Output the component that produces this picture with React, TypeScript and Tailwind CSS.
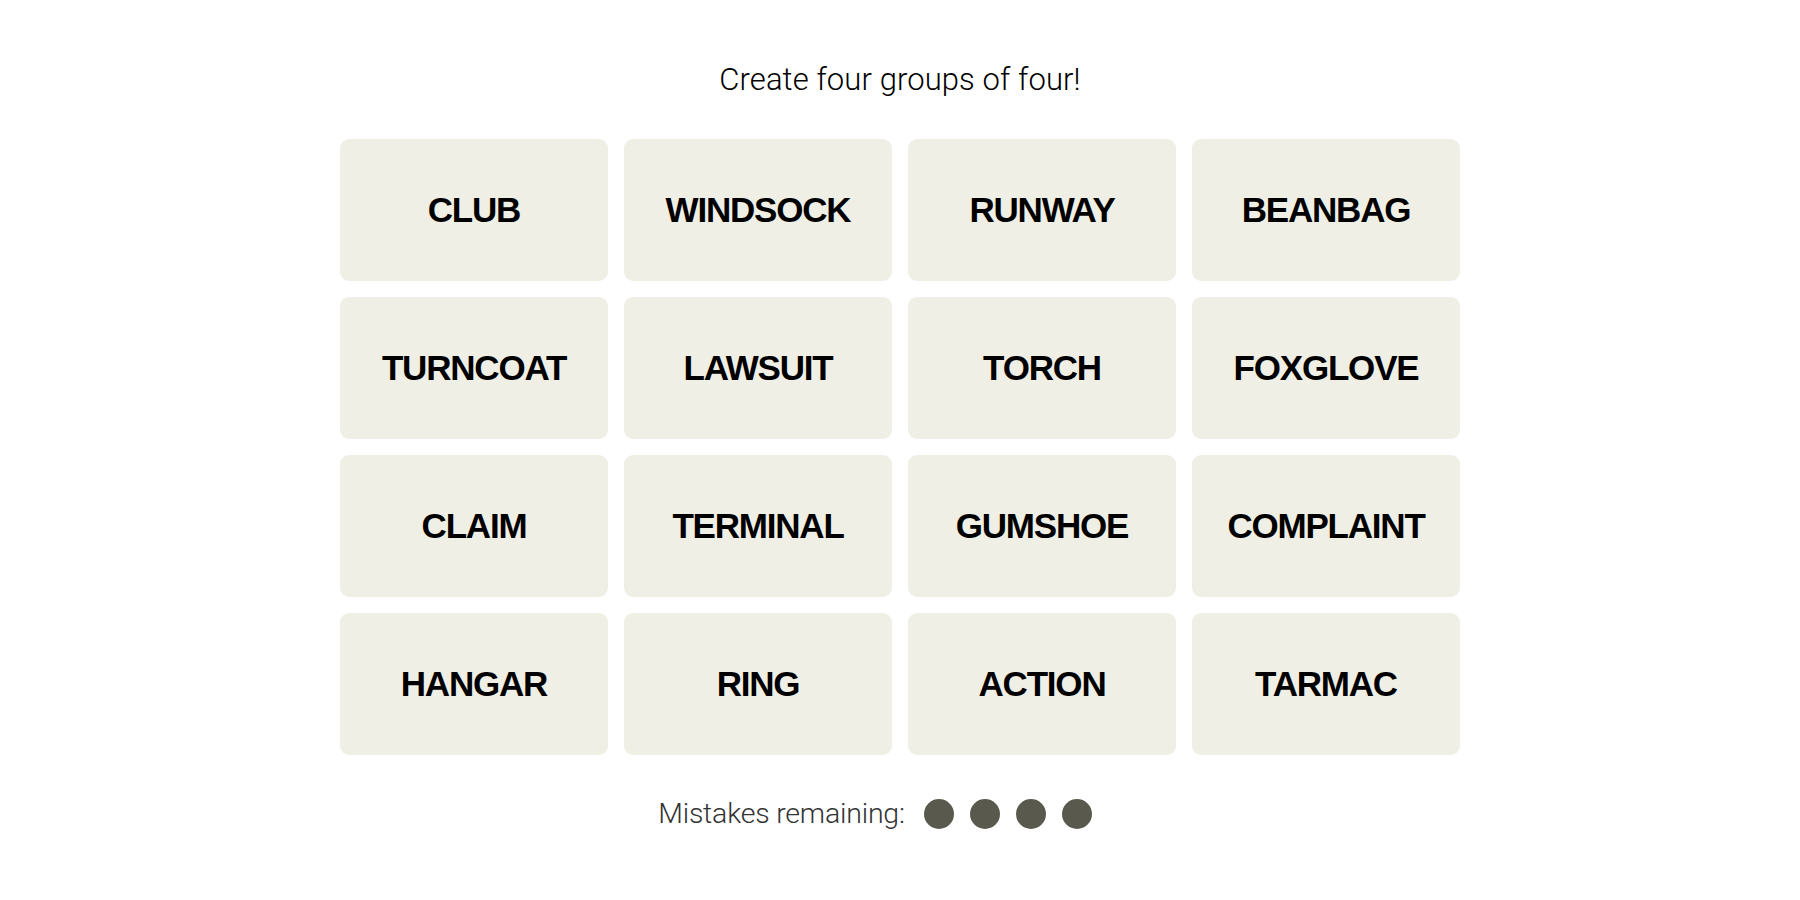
import React from "react";

const words = [
  "CLUB", "WINDSOCK", "RUNWAY", "BEANBAG",
  "TURNCOAT", "LAWSUIT", "TORCH", "FOXGLOVE",
  "CLAIM", "TERMINAL", "GUMSHOE", "COMPLAINT",
  "HANGAR", "RING", "ACTION", "TARMAC",
];

export default function App() {
  return (
    <div className="w-[1800px] h-[900px] bg-white flex flex-col items-center" style={{ fontFamily: "Roboto, 'Liberation Sans', sans-serif" }}>
      <p className="mt-[62px] h-[36px] leading-[36px] text-[31px] font-light text-black tracking-[0.1px]">Create four groups of four!</p>
      <div className="mt-[41px] grid grid-cols-[repeat(4,268px)] grid-rows-[repeat(4,142px)] gap-[16px]">
        {words.map((w) => (
          <div key={w} className="bg-[#efefe6] rounded-[9px] flex items-center justify-center">
            <span className="text-[35px] font-bold text-black tracking-[-1.2px]" style={{ fontFamily: "'Liberation Sans', Arial, sans-serif" }}>{w}</span>
          </div>
        ))}
      </div>
      <div className="mt-[38px] mr-[50px] flex items-center">
        <span className="text-[28.5px] font-light text-[#333333] tracking-[-0.2px]">Mistakes remaining:</span>
        <div className="ml-[19px] flex gap-[16px]">
          <span className="w-[30px] h-[30px] rounded-full bg-[#5a594e]" />
          <span className="w-[30px] h-[30px] rounded-full bg-[#5a594e]" />
          <span className="w-[30px] h-[30px] rounded-full bg-[#5a594e]" />
          <span className="w-[30px] h-[30px] rounded-full bg-[#5a594e]" />
        </div>
      </div>
    </div>
  );
}
